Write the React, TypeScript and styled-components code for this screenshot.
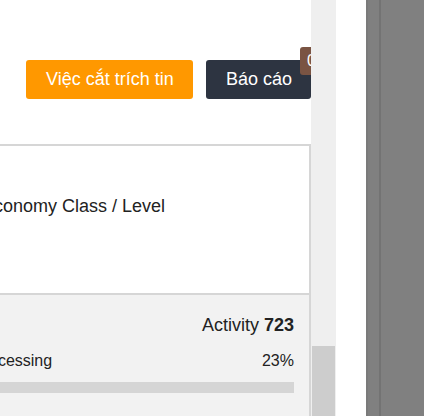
import { createGlobalStyle, styled } from "styled-components";

const GlobalStyle = createGlobalStyle`
  html, body {
    margin: 0;
    padding: 0;
    height: 416px;
    overflow: hidden;
    background: #ffffff;
    font-family: "Liberation Sans", Arial, sans-serif;
  }
`;

const Page = styled.div`
  display: flex;
  width: 424px;
  height: 416px;
`;

const Content = styled.main`
  width: 311px;
  height: 100%;
  overflow: hidden;
  background: #ffffff;
`;

const Toolbar = styled.div`
  display: flex;
  justify-content: flex-end;
  gap: 13px;
  padding-top: 60px;
`;

const ActionButton = styled.button<{ $tone: "orange" | "dark" }>`
  position: relative;
  height: 39px;
  padding: 0 20px;
  border: 0;
  border-radius: 3px;
  font-family: inherit;
  font-size: 18px;
  color: #ffffff;
  white-space: nowrap;
  background: ${({ $tone }) => ($tone === "orange" ? "#ff9800" : "#2d3441")};
  flex-shrink: 0;
  width: ${({ $tone }) => ($tone === "orange" ? "167px" : "105px")};
`;

const Badge = styled.span`
  position: absolute;
  top: -13px;
  left: 94px;
  min-width: 22px;
  height: 28px;
  padding-left: 7px;
  box-sizing: border-box;
  border-radius: 3px;
  background: #7a5443;
  color: #ffffff;
  font-size: 16px;
  line-height: 28px;
  text-align: left;
`;

const Card = styled.section`
  margin: 45px 0 0 -60px;
  border: 2px solid #d6d6d6;
  border-bottom: 0;
  height: 400px;
`;

const CardBody = styled.div`
  height: 147px;
  padding: 48px 0 0 40px;
  box-sizing: border-box;
  font-size: 18px;
  line-height: 24px;
  color: #222222;
  white-space: nowrap;
`;

const CardFooter = styled.div`
  border-top: 2px solid #d6d6d6;
  background: #f2f2f2;
  height: 100%;
  padding: 18px 15px 0 31px;
  color: #222222;
`;

const ActivityRow = styled.div`
  text-align: right;
  font-size: 18px;
  line-height: 24px;

  b {
    font-weight: 700;
  }
`;

const ProgressLabel = styled.div`
  display: flex;
  justify-content: space-between;
  margin-top: 13px;
  font-size: 16px;
  line-height: 22px;
`;

const ProgressTrack = styled.div`
  margin-top: 10px;
  height: 11px;
  background: #d5d5d5;
`;

const ScrollTrack = styled.div`
  width: 25px;
  height: 100%;
  background: #efefef;
  display: flex;
  flex-direction: column;
  justify-content: flex-end;
  align-items: center;
`;

const ScrollThumb = styled.div`
  width: 23px;
  height: 70px;
  background: #cdcdcd;
`;

const Gap = styled.div`
  width: 30px;
  background: #ffffff;
`;

const SidePanel = styled.aside`
  flex: 1;
  background: #808080;
  border-left: 2px solid #7a7a7a;
  display: flex;
`;

const SideRule = styled.div`
  width: 2px;
  margin-left: 11px;
  background: #737373;
`;

export default function App() {
  return (
    <>
      <GlobalStyle />
      <Page>
        <Content>
          <Toolbar>
            <ActionButton $tone="orange">Việc cắt trích tin</ActionButton>
            <ActionButton $tone="dark">
              Báo cáo
              <Badge>0</Badge>
            </ActionButton>
          </Toolbar>
          <Card>
            <CardBody>Economy Class / Level</CardBody>
            <CardFooter>
              <ActivityRow>
                Activity <b>723</b>
              </ActivityRow>
              <ProgressLabel>
                <span>Processing</span>
                <span>23%</span>
              </ProgressLabel>
              <ProgressTrack />
            </CardFooter>
          </Card>
        </Content>
        <ScrollTrack>
          <ScrollThumb />
        </ScrollTrack>
        <Gap />
        <SidePanel>
          <SideRule />
        </SidePanel>
      </Page>
    </>
  );
}
